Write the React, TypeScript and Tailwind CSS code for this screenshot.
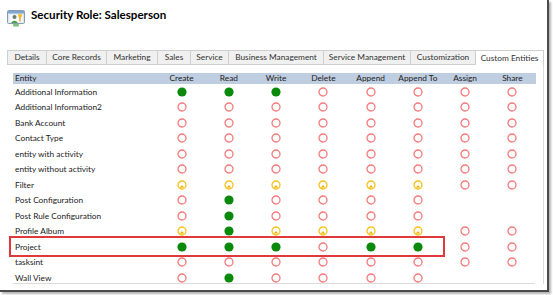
import { FC } from "react";

type Level = "G" | "R" | "Y" | "-";

const tabs = [
  { label: "Details", w: "w-[39px]" },
  { label: "Core Records", w: "w-[60px]" },
  { label: "Marketing", w: "w-[51px]" },
  { label: "Sales", w: "w-[33px]" },
  { label: "Service", w: "w-[38px]" },
  { label: "Business Management", w: "w-[95px]" },
  { label: "Service Management", w: "w-[87px]" },
  { label: "Customization", w: "w-[65px]" },
  { label: "Custom Entities", w: "w-[69px]", active: true },
];

const columns = ["Create", "Read", "Write", "Delete", "Append", "Append To", "Assign", "Share"];

const rows: { name: string; levels: string }[] = [
  { name: "Additional Information", levels: "GGGRRRRR" },
  { name: "Additional Information2", levels: "RRRRRRRR" },
  { name: "Bank Account", levels: "RRRRRRRR" },
  { name: "Contact Type", levels: "RRRRRRRR" },
  { name: "entity with activity", levels: "RRRRRRRR" },
  { name: "entity without activity", levels: "RRRRRRRR" },
  { name: "Filter", levels: "YYYYYYRR" },
  { name: "Post Configuration", levels: "RGRRRR--" },
  { name: "Post Rule Configuration", levels: "RGRRRR--" },
  { name: "Profile Album", levels: "YGYYYYRR" },
  { name: "Project", levels: "GGGRGGRR" },
  { name: "tasksint", levels: "RRRRRRRR" },
  { name: "Wall View", levels: "RGRRRR--" },
];

const Privilege: FC<{ level: Level }> = ({ level }) => {
  if (level === "-") return null;
  if (level === "G")
    return (
      <svg width="10" height="10" viewBox="0 0 10 10">
        <circle cx="5" cy="5" r="4.6" fill="#0a8a0a" />
      </svg>
    );
  if (level === "Y")
    return (
      <svg width="10" height="10" viewBox="0 0 10 10">
        <circle cx="5" cy="5" r="4" fill="#fff" stroke="#f6c21c" strokeWidth="1.3" />
        <path d="M2.6 7.6 A3.2 3.2 0 0 1 7.4 7.6 Z" fill="#f0b400" />
        <path d="M3.2 7.2 L5 4.9 L6.8 7.2 Z" fill="#f0b400" />
      </svg>
    );
  return (
    <svg width="10" height="10" viewBox="0 0 10 10">
      <circle cx="5" cy="5" r="4" fill="none" stroke="#f37b7b" strokeWidth="1.3" />
    </svg>
  );
};

const RoleIcon: FC = () => (
  <svg width="19" height="18" viewBox="0 0 19 18">
    <rect x="0.5" y="1.5" width="17" height="13" rx="1" fill="#dfe7f0" stroke="#8a9cb0" />
    <rect x="1" y="2" width="16" height="2.5" fill="#7ea6d3" />
    <rect x="2.5" y="5.5" width="13" height="8" fill="#f7f9fb" />
    <circle cx="7.5" cy="8" r="2" fill="#6b7d6b" />
    <path d="M4 14 Q7.5 9.5 11 14 Z" fill="#3fa33f" />
    <circle cx="13" cy="6.5" r="2" fill="#f2c230" />
    <rect x="12.3" y="7.5" width="1.4" height="5" fill="#e0a810" />
    <rect x="6" y="15" width="6" height="2.5" rx="1" fill="#7ac27a" />
  </svg>
);

const App: FC = () => {
  return (
    <div className="w-[553px] h-[295px] bg-white font-['Lato',sans-serif] text-[#222]">
      <div className="relative w-[549px] h-[292px] border-r-2 border-b-2 border-[#4a4a4a] shadow-[2px_2px_2px_rgba(0,0,0,0.3)]">
        {/* title */}
        <div className="flex items-center gap-[5px] pl-[7px] pt-[9px] h-[27px]">
          <RoleIcon />
          <span className="text-[11.6px] font-bold leading-none -mt-[6px] text-black whitespace-nowrap">
            Security Role: Salesperson
          </span>
        </div>

        {/* tabs */}
        <div className="flex mt-[23px] pl-[7px] h-[15px]">
          {tabs.map((t, i) => (
            <div
              key={t.label}
              className={`${t.w} flex items-center justify-center whitespace-nowrap border-t border-l border-[#cfcfcf] text-[8.3px] leading-none text-[#333] ${
                t.active ? "bg-white border-r" : "bg-[#f0f0f0] border-b"
              } ${i === tabs.length - 1 ? "border-r" : ""}`}
            >
              {t.label}
            </div>
          ))}
        </div>

        {/* panel */}
        <div className="ml-[7px] w-[537px] border-r border-[#dcdcdc] pt-[8px] pl-[6px] pr-[8px]">
          <div className="grid grid-cols-[145px_repeat(8,47.25px)] text-[8.3px] leading-none whitespace-nowrap">
            <div className="bg-[#bfcde0] h-[11px] flex items-center pl-[2px] text-[#222]">Entity</div>
            {columns.map((c) => (
              <div key={c} className="bg-[#bfcde0] h-[11px] flex items-center justify-center text-[#222]">
                {c}
              </div>
            ))}
            {rows.map((r) => (
              <div key={r.name} className="contents">
                <div className="h-[15.5px] flex items-center pl-[2px] text-[#222]">{r.name}</div>
                {r.levels.split("").map((l, i) => (
                  <div key={i} className="h-[15.5px] flex items-center justify-center">
                    <Privilege level={l as Level} />
                  </div>
                ))}
              </div>
            ))}
          </div>
          <div className="border-b border-[#dcdcdc] -mt-[3px]" />
        </div>

        {/* highlight on Project row */}
        <div className="absolute left-[9px] top-[236px] w-[436px] h-[21px] border-2 border-[#e0393b]" />
      </div>
    </div>
  );
};

export default App;
